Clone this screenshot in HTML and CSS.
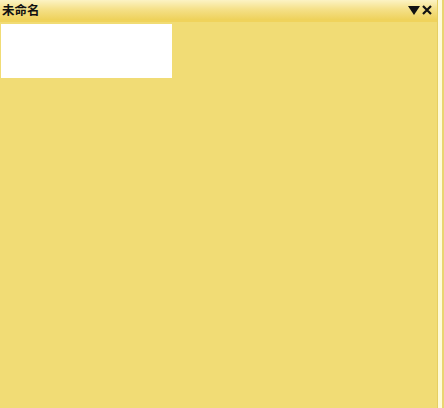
FILE: index.html
```html
<!DOCTYPE html>
<html>
<head>
<meta charset="utf-8">
<link rel="stylesheet" href="styles.css">
</head>
<body>
<div class="window">
  <div class="main">
    <div class="titlebar">
      <span class="title">未命名</span>
      <span class="controls">
        <svg class="tri" width="12" height="9" viewBox="0 0 12 9"><polygon points="0,0 12,0 6,9" fill="#111"/></svg>
        <svg class="close" width="10" height="10" viewBox="0 0 10 10"><path d="M1 1 L9 9 M9 1 L1 9" stroke="#111" stroke-width="2.2"/></svg>
      </span>
    </div>
    <div class="content">
      <div class="box"></div>
    </div>
  </div>
  <div class="strip"></div>
  <div class="edge"></div>
</div>
</body>
</html>
```
FILE: styles.css
```css
html, body {
  margin: 0;
  padding: 0;
  width: 444px;
  height: 408px;
  overflow: hidden;
  background: #f1dc75;
}
.window {
  display: flex;
  width: 444px;
  height: 408px;
}
.main {
  flex: 1;
  display: flex;
  flex-direction: column;
  background: #f1dc75;
}
.titlebar {
  height: 20px;
  display: flex;
  align-items: center;
  justify-content: space-between;
  padding: 0 5px 0 2px;
  background: linear-gradient(to bottom, #fcf3c4 0%, #f5e18a 45%, #eed15a 100%);
  border-bottom: 2px solid #f0d35c;
}
.title {
  font-family: "Noto Sans CJK SC", sans-serif;
  font-weight: bold;
  font-size: 12.5px;
  color: #111;
  line-height: 20px;
}
.controls {
  display: flex;
  align-items: center;
  gap: 2px;
}
.tri { display: block; }
.close { display: block; }
.content {
  flex: 1;
  padding: 2px 0 0 1px;
}
.box {
  width: 171px;
  height: 54px;
  background: #ffffff;
}
.strip {
  width: 4px;
  background: #fffbd8;
  border-left: 1px solid #e6cf60;
}
.edge {
  width: 2px;
  background: #e9d572;
}
```
